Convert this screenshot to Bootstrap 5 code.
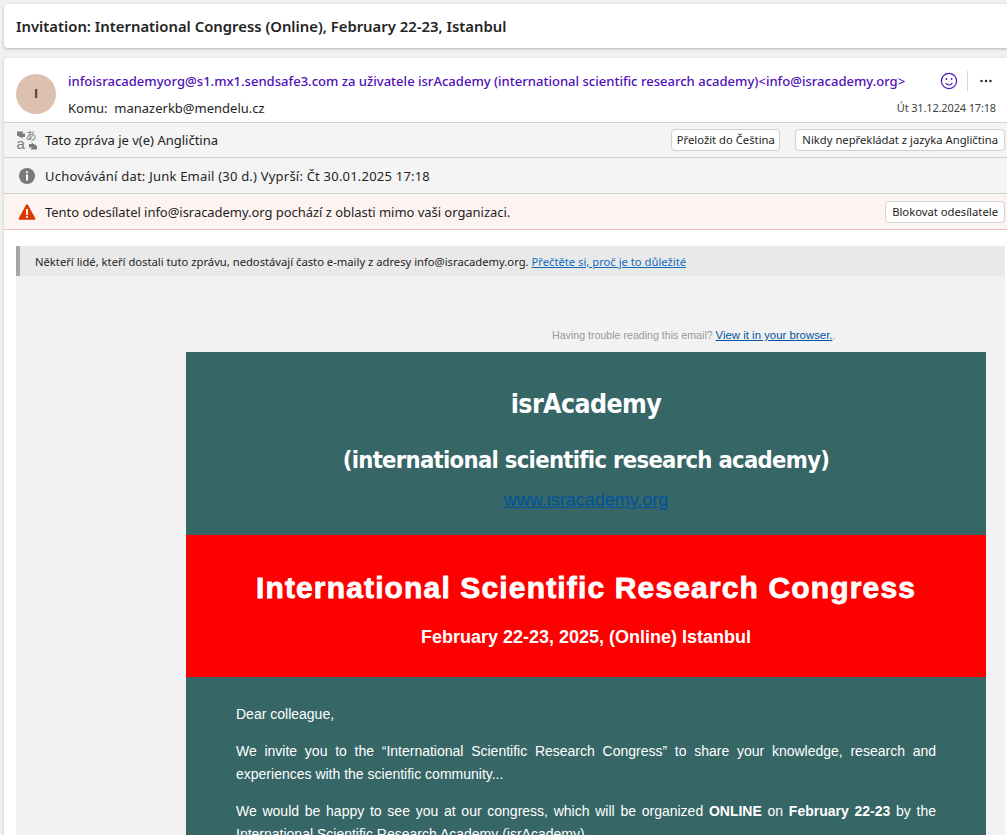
<!DOCTYPE html>
<html lang="cs">

<head>
    <meta charset="UTF-8">
    <meta name="viewport" content="width=device-width, initial-scale=1.0">
    <title>Invitation: International Congress (Online), February 22-23, Istanbul</title>
    <link href="https://cdn.jsdelivr.net/npm/bootstrap@5.3.0/dist/css/bootstrap.min.css" rel="stylesheet">
    <style>
        html, body {
            height: 100vh;
            overflow: hidden;
        }

        body {
            background: #f0f0f0;
            font-family: "Noto Sans", "Open Sans", sans-serif;
            font-size: 13px;
            color: #242424;
            padding: 4px 0 0 4px;
        }

        .subject-card {
            height: 44px;
            background: #fff;
            border-radius: 4px 0 0 4px;
            box-shadow: 0 1px 3px rgba(0, 0, 0, .25);
            padding: 1px 0 0 12px;
            font-size: 14.85px;
            font-weight: 600;
            margin-bottom: 10px;
        }

        .msg-card {
            background: #fff;
            border-radius: 4px 0 0 0;
            box-shadow: 0 1px 3px rgba(0, 0, 0, .2);
            height: 780px;
            overflow: hidden;
        }

        .msg-head {
            height: 64px;
            padding: 13px 2px 0 12px;
        }

        .avatar {
            width: 40px;
            height: 40px;
            margin-top: 3px;
            margin-right: 12px;
            background: #dcc1b0;
            color: #4c3a30;
            font-family: "Liberation Sans", Arial, sans-serif;
            font-size: 13px;
            font-weight: 700;
        }

        .sender {
            color: #4f0fb8;
            font-size: 13.05px;
            line-height: 18px;
            font-weight: 500;
        }

        .sender-acts {
            margin-right: 9px;
        }

        .acts-sep {
            width: 1px;
            height: 20px;
            background: #d6d6d6;
        }

        .recipient {
            line-height: 18px;
            margin-top: 8px;
        }

        .sent-at {
            font-size: 11px;
            letter-spacing: -.15px;
            color: #424242;
            margin-right: 9px;
        }

        .info-row {
            background: #f4f4f4;
            border-top: 1px solid #d1d1d1;
            padding-left: 12px;
            padding-right: 2px;
            height: 36px;
        }

        .row-short {
            height: 35px;
        }

        .info-warn {
            background: #fdf3f1;
            border-bottom: 1px solid #f1bfb0;
            height: 37px;
        }

        .info-ico {
            width: 22px;
            height: 22px;
            flex: none;
            margin-right: 7px;
            overflow: visible;
        }

        .info-text {
            padding-top: 2px;
        }

        .wide-text {
            letter-spacing: .21px;
        }

        .tight-text {
            letter-spacing: -.04px;
        }

        .tiny-btn {
            background: #fff;
            border: 1px solid #d1d1d1;
            border-radius: 4px;
            padding: 0 6px;
            height: 22px;
            line-height: 20px;
            font-size: 11.25px;
            color: #242424;
        }

        .btn-tight {
            padding: 0 4.500px;
            margin-right: 15px;
        }

        .msg-body {
            padding: 16px 2px 0 12px;
        }

        .notice-bar {
            height: 30px;
            background: #e9e9e9;
            border-left: 4px solid #a6a6a6;
            padding: 2px 0 0 15px;
            font-size: 11.22px;
        }

        .notice-bar a {
            color: #0f6cbd;
        }

        .mail-bg {
            background: #f2f2f2;
            padding: 52px 19px 0 170px;
        }

        .trouble {
            font-family: "Liberation Sans", Arial, sans-serif;
            font-size: 10.64px;
            line-height: 14px;
            color: #999;
            padding-left: 366px;
            margin-bottom: 10px;
        }

        .trouble a {
            color: #00539f;
            font-size: 11.4px;
        }

        .mail-top {
            background: #366666;
            color: #fff;
            height: 183px;
            padding-top: 32px;
        }

        .brand-name, .brand-long {
            font-family: "DejaVu Sans Condensed", "DejaVu Sans", sans-serif;
            font-stretch: condensed;
            font-weight: 700;
        }

        .brand-name {
            font-size: 26.5px;
            line-height: 40px;
            letter-spacing: -.6px;
            margin-bottom: 16px;
        }

        .brand-long {
            font-size: 23.6px;
            line-height: 40px;
            letter-spacing: -.7px;
        }

        .brand-url {
            font-family: "Liberation Sans", Arial, sans-serif;
            font-size: 18px;
            color: #00539f;
            line-height: 40px;
        }

        .mail-red {
            background: #f00;
            color: #fff;
            height: 142px;
            font-family: "Liberation Sans", Arial, sans-serif;
            font-weight: 700;
            padding-top: 33px;
        }

        .red-title {
            font-size: 30px;
            line-height: 40px;
            letter-spacing: 1.15px;
            -webkit-text-stroke: .8px #fff;
            margin-bottom: 15px;
        }

        .red-date {
            font-size: 18px;
            line-height: 28px;
        }

        .mail-text {
            background: #366666;
            color: #fff;
            font-family: "Liberation Sans", Arial, sans-serif;
            font-size: 14px;
            line-height: 23px;
            padding: 26px 50px 0;
            height: 300px;
        }

        .mail-text p {
            margin-bottom: 14px;
            text-align: justify;
        }
    </style>
</head>

<body>

    <!-- Subject -->
    <div class="subject-card d-flex align-items-center">Invitation: International Congress (Online), February 22-23, Istanbul</div>

    <div class="msg-card">
        <!-- Sender -->
        <div class="msg-head d-flex">
            <div class="avatar rounded-circle d-flex align-items-center justify-content-center flex-shrink-0">I</div>
            <div class="flex-grow-1">
                <div class="d-flex justify-content-between align-items-center">
                    <div class="sender">infoisracademyorg@s1.mx1.sendsafe3.com za uživatele isrAcademy (international scientific research academy)&lt;info@isracademy.org&gt;</div>
                    <div class="sender-acts d-flex align-items-center gap-2">
                        <svg width="20" height="20" viewBox="0 0 20 20" fill="none" stroke="#4f0fb8" stroke-width="1.2">
                            <circle cx="10" cy="10" r="7.6"/>
                            <circle cx="7.4" cy="8" r=".9" fill="#4f0fb8" stroke="none"/>
                            <circle cx="12.6" cy="8" r=".9" fill="#4f0fb8" stroke="none"/>
                            <path d="M6.6 12c1 1.4 2.1 2 3.4 2s2.400-.6 3.400-2"/>
                        </svg>
                        <span class="acts-sep"></span>
                        <svg width="20" height="20" viewBox="0 0 20 20" fill="#242424">
                            <circle cx="5.500" cy="10" r="1.200"/>
                            <circle cx="10" cy="10" r="1.200"/>
                            <circle cx="14.500" cy="10" r="1.200"/>
                        </svg>
                    </div>
                </div>
                <div class="d-flex justify-content-between align-items-center recipient">
                    <div>Komu:&nbsp; manazerkb@mendelu.cz</div>
                    <div class="sent-at">Út 31.12.2024 17:18</div>
                </div>
            </div>
        </div>

        <!-- Info rows -->
        <div class="info-row row-short d-flex align-items-center">
            <svg class="info-ico" viewBox="0 0 22 22">
                <path d="M1 2.500h6.500L5.800 4.500H9V8H5.800l1.700 2L1 6.500z" fill="#7a7a7a"/>
                <text x="0.500" y="20" font-size="15" font-family="Liberation Sans" fill="#7a7a7a">a</text>
                <text x="9.500" y="10.500" font-size="11" font-family="Noto Sans CJK JP" fill="#7a7a7a">あ</text>
                <path d="M21 20.500h-6.500l1.700-2H13V15h3.200l-1.700-2 6.500 4z" fill="#7a7a7a"/>
            </svg>
            <span class="info-text">Tato zpráva je v(e) Angličtina</span>
            <button type="button" class="tiny-btn btn-tight ms-auto">Přeložit do Čeština</button>
            <button type="button" class="tiny-btn">Nikdy nepřekládat z jazyka Angličtina</button>
        </div>
        <div class="info-row d-flex align-items-center">
            <svg class="info-ico" viewBox="0 0 22 22">
                <circle cx="11" cy="11" r="8" fill="#7a7a7a"/>
                <circle cx="11" cy="7.300" r="1.100" fill="#fff"/>
                <rect x="10" y="9.500" width="2" height="6" fill="#fff"/>
            </svg>
            <span class="info-text wide-text">Uchovávání dat: Junk Email (30 d.) Vyprší: Čt 30.01.2025 17:18</span>
        </div>
        <div class="info-row info-warn d-flex align-items-center">
            <svg class="info-ico" viewBox="0 0 22 22">
                <path d="M11 3.200c.5 0 .9.300 1.100.7l7.200 13.300c.4.800-.1 1.600-1 1.600H3.700c-.9 0-1.400-.8-1-1.600L9.900 3.900c.2-.4.600-.7 1.100-.7z" fill="#dc3900"/>
                <rect x="10.100" y="8" width="1.800" height="6" fill="#fff"/>
                <circle cx="11" cy="16" r="1.100" fill="#fff"/>
            </svg>
            <span class="info-text tight-text">Tento odesílatel info@isracademy.org pochází z oblasti mimo vaši organizaci.</span>
            <button type="button" class="tiny-btn ms-auto">Blokovat odesílatele</button>
        </div>

        <div class="msg-body">
            <div class="notice-bar d-flex align-items-center">
                <span>Někteří lidé, kteří dostali tuto zprávu, nedostávají často e-maily z adresy info@isracademy.org.&nbsp;<a href="#">Přečtěte si, proč je to důležité</a></span>
            </div>

            <!-- Mail content -->
            <div class="mail-bg">
                <div class="trouble">Having trouble reading this email? <a href="#">View it in your browser.</a>.</div>
                <div class="mail-top text-center">
                    <div class="brand-name">isrAcademy</div>
                    <div class="brand-long">(international scientific research academy)</div>
                    <a class="brand-url d-block" href="#">www.isracademy.org</a>
                </div>
                <div class="mail-red text-center">
                    <div class="red-title">International Scientific Research Congress</div>
                    <div class="red-date">February 22-23, 2025, (Online) Istanbul</div>
                </div>
                <div class="mail-text">
                    <p>Dear colleague,</p>
                    <p>We invite you to the “International Scientific Research Congress” to share your knowledge, research and experiences with the scientific community...</p>
                    <p>We would be happy to see you at our congress, which will be organized <b>ONLINE</b> on <b>February 22-23</b> by the International Scientific Research Academy (isrAcademy).</p>
                </div>
            </div>
        </div>
    </div>

    <script src="https://cdn.jsdelivr.net/npm/bootstrap@5.3.0/dist/js/bootstrap.bundle.min.js"></script>
</body>

</html>
